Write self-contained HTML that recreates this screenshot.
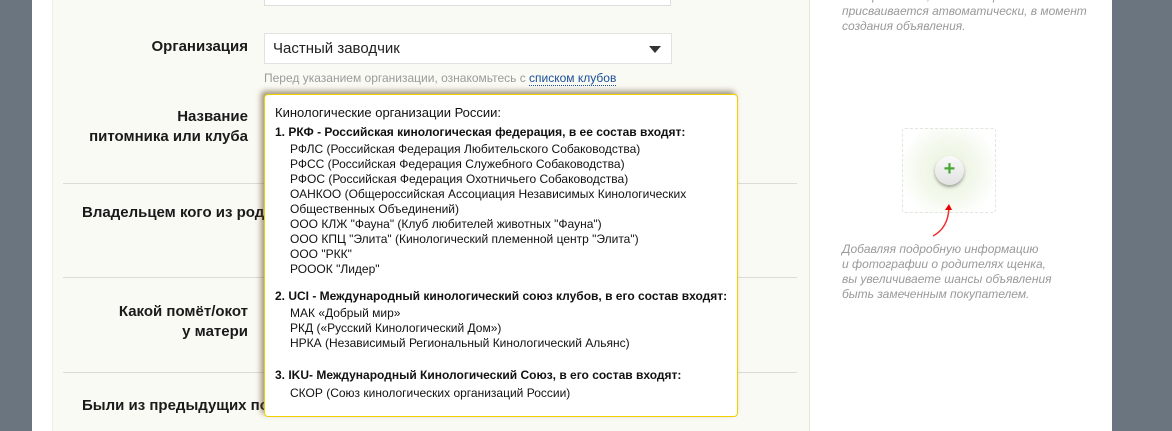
<!DOCTYPE html>
<html><head><meta charset="utf-8"><style>
*{margin:0;padding:0;box-sizing:border-box}
body{width:1172px;height:431px;overflow:hidden;background:#6b7580;font-family:"Liberation Sans","DejaVu Sans",sans-serif;position:relative}
.abs{position:absolute}
.white{left:32px;top:0;width:1080px;height:431px;background:#fff}
.cream{left:52px;top:0;width:758px;height:431px;background:#fafaf4;border-right:1px solid #e6e6d8;border-left:1px solid #eeeee2}
.sep{left:63px;width:734px;height:1px;background:#dcdcd4}
.lbl{right:924px;text-align:right;font-size:15px;font-weight:bold;color:#1a1a1a;line-height:20px;white-space:nowrap}
.pop{left:264px;top:94px;width:474px;height:323px;background:#fff;border:1px solid #f0d000;border-radius:4px;box-shadow:-3px -3px 6px rgba(90,70,30,.55);font-size:12px;color:#111;line-height:15px;padding:10px 0 0 10px}
.pop b{display:block}
.pop .i{padding-left:15px}
.side{font-size:12px;font-style:italic;color:#999;line-height:15px;left:842px}
</style></head><body>
<div class="abs white"></div>
<div class="abs cream"></div>
<div class="abs" style="left:264px;top:-4px;width:407px;height:10px;background:#fff;border:1px solid #ddd"></div>
<div class="abs lbl" style="top:37px">Организация</div>
<div class="abs" style="left:264px;top:33px;width:408px;height:31px;background:#fff;border:1px solid #e2e2e2;font-size:15px;line-height:30px;padding-left:8px;color:#222">Частный заводчик
<div class="abs" style="right:10px;top:12px;width:0;height:0;border-left:6px solid transparent;border-right:6px solid transparent;border-top:7px solid #333"></div></div>
<div class="abs" style="left:264px;top:70px;font-size:12px;color:#9a9a9a;line-height:16px">Перед указанием организации, ознакомьтесь с <span style="color:#1a4f9a;border-bottom:1px dotted #1a4f9a">списком клубов</span></div>
<div class="abs lbl" style="top:107px">Название<br>питомника или клуба</div>
<div class="abs sep" style="top:183px"></div>
<div class="abs lbl" style="top:203px;left:82px;right:auto;text-align:left">Владельцем кого из родителей</div>
<div class="abs sep" style="top:277px"></div>
<div class="abs lbl" style="top:302px">Какой помёт/окот<br>у матери</div>
<div class="abs sep" style="top:372px"></div>
<div class="abs lbl" style="top:396px;left:82px;right:auto;text-align:left">Были из предыдущих пометов</div>
<div class="abs pop">
<div style="font-size:13px;margin-bottom:5px">Кинологические организации России:</div>
<b>1. РКФ - Российская кинологическая федерация, в ее состав входят:</b>
<div class="i" style="margin-top:2px">РФЛС (Российская Федерация Любительского Собаководства)<br>РФСС (Российская Федерация Служебного Собаководства)<br>РФОС (Российская Федерация Охотничьего Собаководства)<br>ОАНКОО (Общероссийская Ассоциация Независимых Кинологических<br>Общественных Объединений)<br>ООО КЛЖ "Фауна" (Клуб любителей животных "Фауна")<br>ООО КПЦ "Элита" (Кинологический племенной центр "Элита")<br>ООО "РКК"<br>РОООК "Лидер"</div>
<b style="margin-top:12px">2. UCI - Международный кинологический союз клубов, в его состав входят:</b>
<div class="i" style="margin-top:2px">МАК «Добрый мир»<br>РКД («Русский Кинологический Дом»)<br>НРКА (Независимый Региональный Кинологический Альянс)</div>
<b style="margin-top:17px">3. IKU- Международный Кинологический Союз, в его состав входят:</b>
<div class="i" style="margin-top:3px">СКОР (Союз кинологических организаций России)</div>
</div>
<div class="abs side" style="top:-11px">Номер помета, как и номер объявления<br>присваивается атвоматически, в момент<br>создания объявления.</div>
<div class="abs" style="left:902px;top:128px;width:94px;height:85px;border:1px dashed #e2e6dc;border-radius:3px;background:radial-gradient(circle at 50% 50%,#e8f2dc 0%,#f4f9ee 50%,#fff 80%)"></div>
<div class="abs" style="left:935px;top:156px;width:29px;height:29px;border-radius:50%;background:linear-gradient(#fafafa,#e2e2e2);box-shadow:0 2px 3px rgba(0,0,0,.35);color:#4aa83a;font-size:20px;line-height:27px;text-align:center;font-weight:bold">+</div>
<svg class="abs" style="left:930px;top:200px" width="30" height="40"><path d="M3 36 Q18 28 19 8" stroke="#f03030" stroke-width="1.5" fill="none"/><path d="M15 10 L19 4 L22 10Z" fill="#e00"/></svg>
<div class="abs side" style="top:242px">Добавляя подробную информацию<br>и фотографии о родителях щенка,<br>вы увеличиваете шансы объявления<br>быть замеченным покупателем.</div>
</body></html>
